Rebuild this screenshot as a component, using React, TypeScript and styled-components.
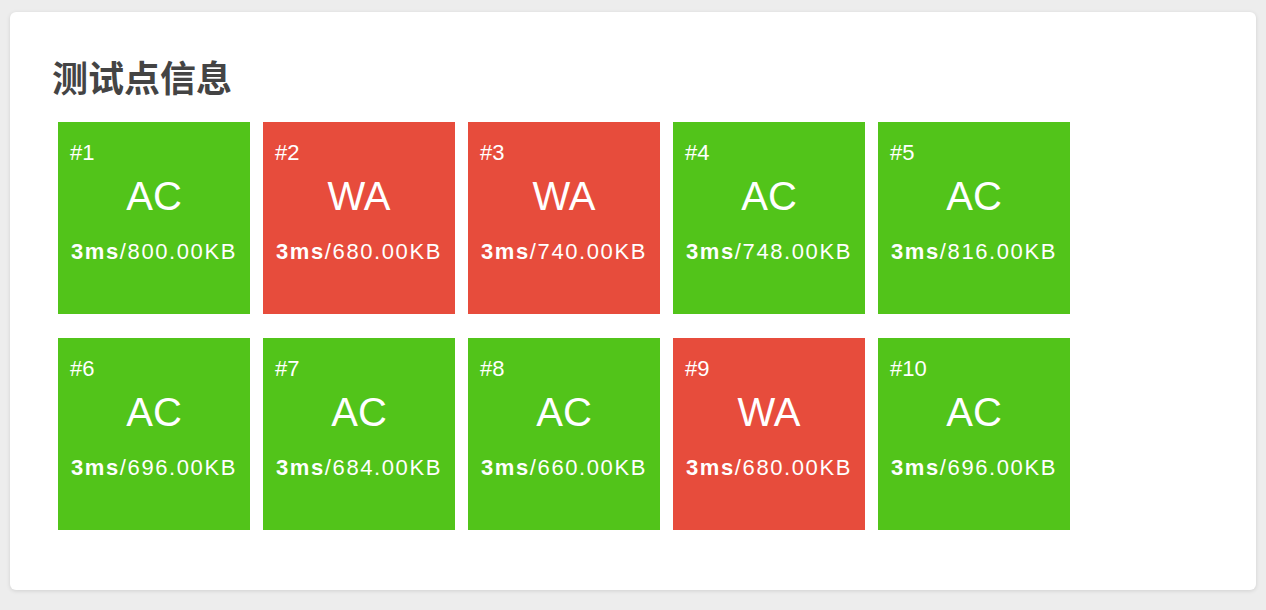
import React from "react";
import styled, { createGlobalStyle } from "styled-components";

const GlobalStyle = createGlobalStyle`
  html, body {
    margin: 0;
    padding: 0;
    background: #ededed;
  }
  body {
    font-family: "Liberation Sans", "Noto Sans CJK SC", Arial, sans-serif;
  }
`;

const Page = styled.div`
  padding: 12px 10px 20px 10px;
`;

const Card = styled.section`
  background: #ffffff;
  border-radius: 6px;
  box-shadow: 0 1px 4px rgba(0, 0, 0, 0.12);
  padding: 42px 42px 60px 42px;
`;

const Title = styled.h2`
  margin: 0 0 24px 0;
  font-family: "Noto Sans CJK SC", sans-serif;
  font-size: 36px;
  font-weight: 700;
  line-height: 44px;
  color: #444444;
`;

const Grid = styled.div`
  display: grid;
  grid-template-columns: repeat(5, 192px);
  column-gap: 13px;
  row-gap: 24px;
  margin-left: 6px;
`;

const Box = styled.div<{ $ok: boolean }>`
  width: 192px;
  height: 192px;
  box-sizing: border-box;
  background: ${(p) => (p.$ok ? "#52c41a" : "#e74c3c")};
  color: #ffffff;
  display: flex;
  flex-direction: column;
  padding: 18px 12px 0 12px;
`;

const CaseNo = styled.div`
  font-size: 22px;
  line-height: 26px;
  text-align: left;
`;

const Status = styled.div`
  font-size: 40px;
  line-height: 46px;
  text-align: center;
  margin-top: 7px;
`;

const Stats = styled.div`
  font-size: 22px;
  line-height: 28px;
  text-align: center;
  margin: 19px -12px 0 -12px;
  white-space: nowrap;
  letter-spacing: 1.6px;
`;

const Time = styled.b`
  font-weight: 700;
`;

const cases = [
  { ok: true, mem: "800.00" },
  { ok: false, mem: "680.00" },
  { ok: false, mem: "740.00" },
  { ok: true, mem: "748.00" },
  { ok: true, mem: "816.00" },
  { ok: true, mem: "696.00" },
  { ok: true, mem: "684.00" },
  { ok: true, mem: "660.00" },
  { ok: false, mem: "680.00" },
  { ok: true, mem: "696.00" },
];

export default function App() {
  return (
    <>
      <GlobalStyle />
      <Page>
        <Card>
          <Title>测试点信息</Title>
          <Grid>
            {cases.map((c, i) => (
              <Box key={i} $ok={c.ok}>
                <CaseNo>#{i + 1}</CaseNo>
                <Status>{c.ok ? "AC" : "WA"}</Status>
                <Stats>
                  <Time>3ms</Time>/{c.mem}KB
                </Stats>
              </Box>
            ))}
          </Grid>
        </Card>
      </Page>
    </>
  );
}
